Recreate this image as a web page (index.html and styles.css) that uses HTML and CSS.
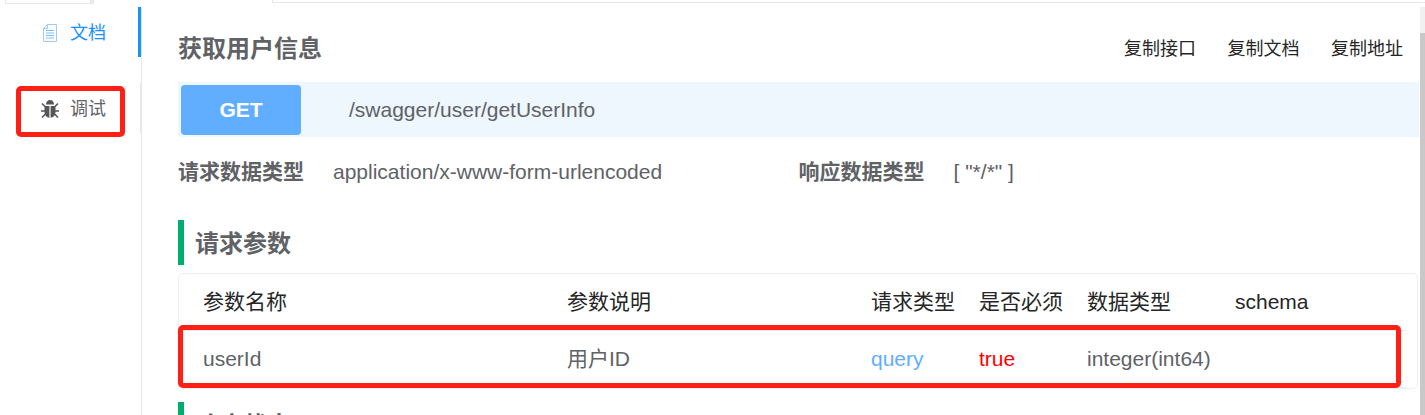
FILE: index.html
```html
<!DOCTYPE html>
<html lang="zh-CN">
<head>
    <meta charset="UTF-8">
    <title>获取用户信息</title>
    <link rel="stylesheet" href="styles.css">
</head>
<body>
    <div class="top-strip">
        <div class="top-tab"></div>
        <div class="top-line"></div>
    </div>
    <div class="page">
        <div class="side-nav">
            <div class="nav-item active">
                <svg class="nav-icon" width="18" height="18" viewBox="0 0 18 18">
                    <path d="M6.500 .5H15.500V17.500H2.500V4.500Z" fill="#fff" stroke="#9accfb"/>
                    <path d="M2.500 4.500H6.500V.5" fill="none" stroke="#9accfb"/>
                    <path d="M5 6.500H13M5 9H13M5 11.500H13M5 14H13" stroke="#7dbefa"/>
                </svg>
                <span>文档</span>
            </div>
            <div class="nav-item">
                <svg class="nav-icon" width="18" height="20" viewBox="0 0 18 20">
                    <path d="M5 5.500C5 2.500 6.800 1 9 1S13 2.500 13 5.500Z" fill="#555"/>
                    <path d="M3.500 7H8.400V18.800C5.500 18.500 3.500 16.500 3.500 13ZM9.600 7H14.500V13C14.500 16.500 12.500 18.500 9.600 18.800Z" fill="#555"/>
                    <path d="M1 4.500L4 7.500M17 4.500L14 7.500M0 12H4M18 12H14M1 18.500L4.500 15M17 18.500L13.500 15" stroke="#555" stroke-width="1.600" fill="none"/>
                </svg>
                <span>调试</span>
            </div>
            <div class="mark mark-nav"></div>
        </div>
        <div class="content">
            <div class="title-row">
                <h2>获取用户信息</h2>
                <div class="copy-links">
                    <a>复制接口</a>
                    <a>复制文档</a>
                    <a>复制地址</a>
                </div>
            </div>
            <div class="path-bar">
                <span class="method">GET</span>
                <span class="path">/swagger/user/getUserInfo</span>
            </div>
            <div class="meta-row">
                <div class="meta-item">
                    <b>请求数据类型</b>
                    <span>application/x-www-form-urlencoded</span>
                </div>
                <div class="meta-item">
                    <b>响应数据类型</b>
                    <span>[ "*/*" ]</span>
                </div>
            </div>
            <h3 class="section-title">请求参数</h3>
            <div class="param-table">
                <div class="param-row param-head">
                    <span>参数名称</span>
                    <span>参数说明</span>
                    <span>请求类型</span>
                    <span>是否必须</span>
                    <span>数据类型</span>
                    <span>schema</span>
                </div>
                <div class="param-row">
                    <span>userId</span>
                    <span>用户ID</span>
                    <span class="in-query">query</span>
                    <span class="required">true</span>
                    <span>integer(int64)</span>
                    <span></span>
                </div>
                <div class="mark mark-row"></div>
            </div>
            <h3 class="section-title">响应状态</h3>
        </div>
        <div class="scroll-bar"><div class="scroll-thumb"></div></div>
    </div>
</body>
</html>
```

FILE: styles.css
```css
html, body {
    margin: 0;
    height: 415px;
    overflow: hidden;
}

body {
    background: #fff;
    color: #606266;
    font-family: "Liberation Sans", "Noto Sans CJK SC", sans-serif;
}

.top-strip {
    display: flex;
    height: 7px;
}

.top-tab {
    width: 84px;
    height: 1px;
    margin-left: 5px;
    padding-top: 2px;
    border: 1px solid #e8e8e8;
    border-top: none;
    border-right-width: 4px;
    box-sizing: content-box;
}

.top-line {
    flex: 1;
    height: 3px;
    margin-left: 178px;
    border-bottom: 1px solid #e8e8e8;
    border-left: 1px solid #e8e8e8;
    box-sizing: border-box;
}

.page {
    display: flex;
    height: 408px;
}

.side-nav {
    position: relative;
    width: 142px;
    flex-shrink: 0;
    border-right: 1px solid #e8e8e8;
    box-sizing: border-box;
}

.nav-item {
    display: flex;
    align-items: center;
    height: 50px;
    margin-bottom: 26px;
    padding-left: 41px;
    padding-top: 1px;
    box-sizing: border-box;
    font-size: 18px;
    border-right: 1px solid #e8e8e8;
}

.nav-item span {
    margin-left: 11px;
    line-height: 20px;
}

.nav-item.active {
    color: #1890ff;
    border-right: 3px solid #1890ff;
}

.content {
    flex: 1;
    min-width: 0;
    padding-left: 36px;
    overflow: hidden;
}

.title-row {
    display: flex;
    justify-content: space-between;
    align-items: center;
    height: 75px;
    padding-top: 8px;
    padding-right: 16px;
    box-sizing: border-box;
}

.title-row h2 {
    margin: 1px 0 0;
    font-size: 24px;
    font-weight: bold;
    line-height: 30px;
}

.copy-links {
    display: flex;
    gap: 31.5px;
    font-size: 18px;
    line-height: 24px;
    color: #262626;
}

.path-bar {
    display: flex;
    align-items: center;
    height: 55px;
    padding-left: 3px;
    background: #eef6fe;
}

.method {
    width: 120px;
    height: 50px;
    line-height: 50px;
    text-align: center;
    background: #61adff;
    border-radius: 4px;
    color: #fff;
    font-size: 21px;
    font-weight: bold;
}

.path {
    margin-left: 48px;
    font-size: 21px;
}

.meta-row {
    display: flex;
    align-items: center;
    height: 70px;
    font-size: 21px;
    line-height: 28px;
}

.meta-item {
    display: flex;
    width: 621px;
}

.meta-item b {
    margin-right: 29px;
}

.section-title {
    height: 45px;
    line-height: 48px;
    margin: 13px 0 8px;
    padding-left: 11px;
    border-left: 6px solid #00ab6d;
    font-size: 24px;
    font-weight: bold;
}

.param-table {
    position: relative;
    margin-right: 1px;
    border: 1px solid #ebeef5;
    border-radius: 5px;
    font-size: 21px;
    line-height: 28px;
    margin-bottom: 13px;
}

.param-row {
    display: grid;
    grid-template-columns: 364px 304px 108px 108px 148px 1fr;
    align-items: center;
    height: 56px;
    margin-right: 11px;
    padding-left: 24px;
    border-bottom: 1px solid #ebeef5;
}

.param-row:last-of-type {
    height: 56px;
    padding-bottom: 1px;
    border-bottom: none;
}

.param-head {
    color: #262626;
}

.in-query {
    color: #61adff;
}

.required {
    color: #f00;
}

/* red annotation boxes drawn over the screenshot */
.mark {
    position: absolute;
    border: 5px solid #ff2015;
    border-radius: 5px;
    box-sizing: border-box;
}

.mark-nav {
    left: 16px;
    top: 79px;
    width: 109px;
    height: 51px;
}

.mark-row {
    left: -1px;
    top: 51px;
    width: 1223px;
    height: 63px;
}

.scroll-bar {
    width: 5px;
    margin-left: 1px;
    flex-shrink: 0;
    background: #f1f1f1;
    padding-top: 26px;
    box-sizing: border-box;
}

.scroll-thumb {
    height: 100%;
    background: #c8c8c8;
}
```
